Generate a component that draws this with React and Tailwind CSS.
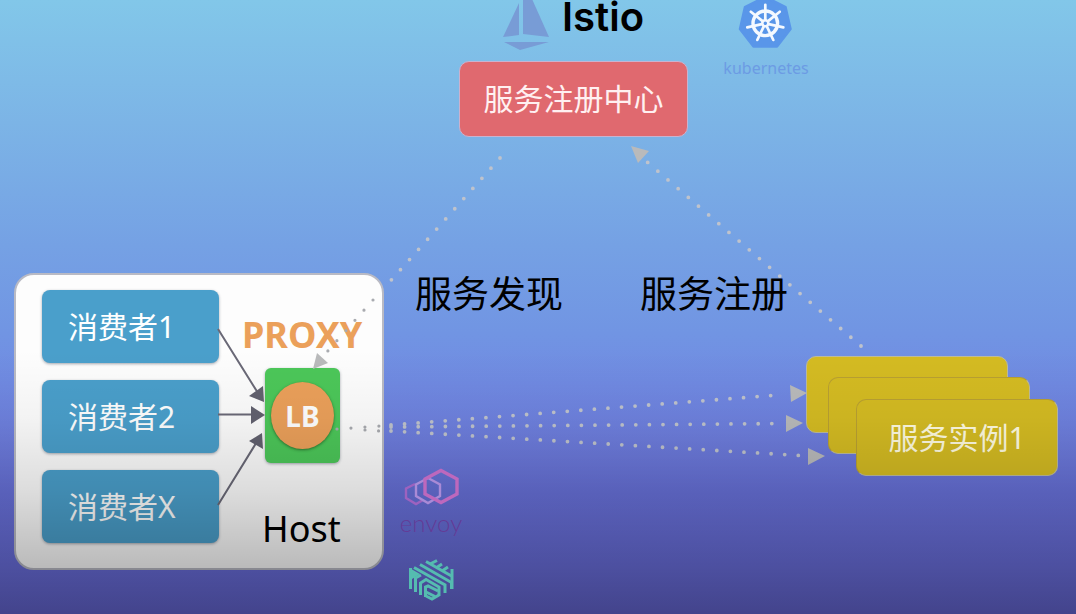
const dots = {
  fill: "none",
  stroke: "#bfc3cc",
  strokeWidth: 3.8,
  strokeLinecap: "round",
};

const NODE_SHADOW = "shadow-[0_1px_3px_rgba(30,40,60,0.4)]";

function Links() {
  return (
    <svg className="pointer-events-none absolute left-0 top-0" width="1076" height="614" viewBox="0 0 1076 614" aria-hidden="true">
      <g {...dots}>
        <path d="M500 158L388 283.700" strokeDasharray="0 13.6" />
        <path d="M861 346L646 161" strokeDasharray="0 13.4" />
        <path d="M391 425L784 394.500" strokeDasharray="0 13.6" />
        <path d="M391 427L784 423.500" strokeDasharray="0 13.6" />
        <path d="M391 431L800 455.500" strokeDasharray="0 13.6" />
      </g>
      <g {...dots} stroke="#a9abb0" strokeWidth="3.2">
        <path d="M373 300L326 353" strokeDasharray="0 13.6" />
        <path d="M337 429L380 426" strokeDasharray="0 14" />
        <path d="M365 430L380 431" strokeDasharray="0 13.6" />
      </g>
      <g fill="#b9babb">
        <path d="M313 369L317 353L328 363Z" />
        <path d="M631 146L649 151L638 163Z" />
        <path d="M790 385L807 393L791 402Z" />
        <path d="M786 415L803 423L786 432Z" />
        <path d="M808 448L825 456L808 465Z" />
      </g>
      <g stroke="#6a6977" strokeWidth="2">
        <path d="M218 329L258 393M218 414.500H254M218 505L258 440" />
      </g>
      <g fill="#62616f">
        <path d="M249 396L263 386L264 402Z" />
        <path d="M251 406L265 415L251 424Z" />
        <path d="M249 441L262 433L263 449Z" />
      </g>
    </svg>
  );
}

function IstioLogo() {
  return (
    <svg className="shrink-0" width="50" height="52" viewBox="0 0 50 52" aria-hidden="true" fill="#789cd6">
      <path d="M17 3V35L1 37Z" />
      <path d="M21 -10H26L47 37L21 34Z" />
      <path d="M2 42H47L18 50Z" />
    </svg>
  );
}

function KubernetesLogo() {
  const spokes = [0, 1, 2, 3, 4, 5, 6].map((i) => (i * 360) / 7);
  return (
    <svg width="56" height="52" viewBox="0 0 56 52" aria-hidden="true">
      <path d="M27.300 -3L47.500 7L52.500 29L39 46.500H15.500L2 29L7 7Z" fill="#5996e9" stroke="#5996e9" strokeWidth="2.500" strokeLinejoin="round" />
      <g transform="translate(27.300 23.300)" stroke="#f4f9ff" fill="none">
        <circle r="12.300" strokeWidth="3.400" />
        {spokes.map((a) => (
          <path key={a} d="M0 -3.500V-18.500" strokeWidth="2.700" strokeLinecap="round" transform={`rotate(${a})`} />
        ))}
        <circle r="3" strokeWidth="2.600" />
      </g>
    </svg>
  );
}

function EnvoyLogo() {
  return (
    <svg width="60" height="44" viewBox="0 0 60 44" aria-hidden="true" fill="none">
      <path d="M14 17L5 21.500V31L15 37L22 33" stroke="#9d62bf" strokeWidth="2.400" />
      <path d="M27 11L39 17.500V29L27 36L15 29V17.500Z" stroke="#a98ad6" strokeWidth="2.400" />
      <path d="M40 3.500L56 12V27L40 35.500L24 27V12Z" stroke="#bd68bd" strokeWidth="3.400" />
    </svg>
  );
}

function MeshLogo() {
  return (
    <svg width="46" height="42" viewBox="0 0 46 42" aria-hidden="true" fill="none" stroke="#55bcb0" strokeWidth="3">
      <path d="M2.500 30V9M7.500 33V19L13 16M12.500 36V24L18 20.500L31 28V37" />
      <path d="M1.500 9L12 15L4 20Z" fill="#55bcb0" stroke="none" />
      <path d="M17.500 38V28L20 27L30 32M18 33L28 38M18 37L24 40L31 36" />
      <path d="M6 8.500L37 26V34M12 5.500L43.500 23.500V30M18 2.500L43.500 17" />
      <path d="M22 5L29 1.500M28 9L34 5M34 12L40 8M44 10V30" />
    </svg>
  );
}

function Consumer({ children }) {
  return (
    <li className={`flex h-[73px] items-center rounded-lg bg-[#4a9fcb] pl-[26px] text-[30px] leading-9 text-white ${NODE_SHADOW}`}>
      {children}
    </li>
  );
}

export default function App() {
  return (
    <main className="relative min-h-screen w-full overflow-hidden bg-[linear-gradient(180deg,#82c7e9_0%,#7cb4e6_20%,#75a1e4_40%,#7195e3_54%,#7089e2_63%,#6d7cdc_72%,#666fd6_80%,#696adb_100%)] font-['Noto_Sans','Noto_Sans_CJK_SC',sans-serif]">
      <header className="flex pl-[459px]">
        <div className="w-[229px]">
          <div className="flex h-[61px] items-start gap-[10px] pl-[43px]">
            <IstioLogo />
            <h1 className="font-['Inter',sans-serif] text-[40px] font-semibold leading-[34px] text-black">Istio</h1>
          </div>
          <div className="flex h-[76px] items-center justify-center rounded-[10px] border border-[#c9b2cf] bg-[#e0696f] text-[30px] leading-9 text-[#fff0f1]">
            服务注册中心
          </div>
        </div>
        <div className="ml-[34px] flex w-[88px] flex-col items-center">
          <KubernetesLogo />
          <p className="mt-[6px] text-base leading-5 text-[#6c9be4]">kubernetes</p>
        </div>
      </header>

      <div className="flex items-start pl-[14px] pt-[133px]">
        <section className="mt-[3px] flex w-[370px] shrink-0 rounded-[20px] border-2 border-[#b9bac4] bg-[#fdfdfd] py-[15px] pl-[26px]">
          <ul className="flex w-[177px] flex-col gap-[17px]">
            <Consumer>消费者1</Consumer>
            <Consumer>消费者2</Consumer>
            <Consumer>消费者X</Consumer>
          </ul>
          <div className="flex flex-1 flex-col pl-[23px] pt-[21px]">
            <h2 className="text-[36px] font-bold leading-[48px] text-[#eba05a]">PROXY</h2>
            <div className={`ml-[23px] mt-[9px] flex h-[95px] w-[75px] items-center justify-center rounded-md bg-[#4cc759] ${NODE_SHADOW}`}>
              <span className="flex h-[67px] w-[63px] items-center justify-center rounded-[50%] bg-[#eba05a] text-[28px] font-bold leading-9 text-white shadow-[0_1px_3px_rgba(20,60,20,0.6)]">
                LB
              </span>
            </div>
            <p className="ml-[20px] mt-[42px] text-[36px] leading-[48px] text-black">Host</p>
          </div>
        </section>

        <div className="relative z-10 w-[422px] shrink-0 pl-[15px]">
          <div className="flex gap-[77px] pl-[16px] text-[37px] leading-[48px] text-black">
            <p>服务发现</p>
            <p>服务注册</p>
          </div>
          <div className="mt-[149px] flex w-[64px] flex-col items-center">
            <EnvoyLogo />
            <p className="-mt-[4px] font-['Lato',sans-serif] text-2xl font-light leading-8 text-[#643b96]">envoy</p>
            <div className="mt-[20px]">
              <MeshLogo />
            </div>
          </div>
        </div>

        <div className="mt-[86px] grid shrink-0 text-[30px] leading-9 text-[#fffbe0]">
          <div className="col-start-1 row-start-1 h-[77px] w-[202px] rounded-[10px] border border-[#bdbb9c] bg-[#d4bb22]" />
          <div className="col-start-1 row-start-1 ml-[22px] mt-[21px] h-[77px] w-[202px] rounded-[10px] border border-l-[#b9a032] border-t-[#b9a032] border-[#bdbb9c] bg-[#d4bb22]" />
          <div className="col-start-1 row-start-1 ml-[50px] mt-[43px] flex h-[77px] w-[202px] items-center justify-center rounded-[10px] border border-l-[#b9a032] border-t-[#b9a032] border-[#bdbb9c] bg-[#d4bb22]">
            服务实例1
          </div>
        </div>
      </div>

      <Links />

      <div className="pointer-events-none absolute inset-0 bg-[linear-gradient(180deg,transparent_57%,rgba(0,0,0,0.04)_68%,rgba(0,0,0,0.13)_80%,rgba(0,0,0,0.26)_92%,rgba(0,0,0,0.36)_100%)]" />
    </main>
  );
}
